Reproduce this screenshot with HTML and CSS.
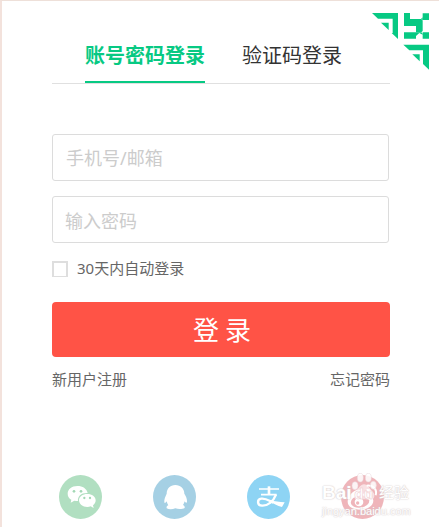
FILE: index.html
```html
<!DOCTYPE html>
<html lang="zh-CN">
<head>
    <meta charset="UTF-8">
    <meta name="viewport" content="width=device-width, initial-scale=1.0">
    <title>账号密码登录</title>
    <link rel="stylesheet" href="styles.css">
</head>
<body>

<div class="login-box">
    <svg class="qr-corner" viewBox="36 39 171 171">
        <path d="M36 39H114V117L95 99H98V56H54z"/>
        <path d="M63 68H86V90z"/>
        <path d="M132 39H150V57H183L188 62V93L184 97H168V78H132z"/>
        <path d="M132 97H168V116H132zM188 40H207V60H188zM188 97H207V116H188z"/>
        <path d="M183 57L188 52V62zM168 97H184L188 101V104L178 99L168 108z"/>
        <path d="M130 134H207V209L189 192V151H148z"/>
        <path d="M157 163H179V184z"/>
    </svg>

    <div class="tabs">
        <a class="tab active">账号密码登录</a>
        <a class="tab">验证码登录</a>
    </div>

    <form class="login-form">
        <input type="text" class="field" placeholder="手机号/邮箱">
        <input type="password" class="field field-password" placeholder="输入密码">
        <label class="remember">
            <span class="checkbox"></span>
            <span>30天内自动登录</span>
        </label>
        <button type="button" class="submit">登录</button>
        <div class="links">
            <a>新用户注册</a>
            <a>忘记密码</a>
        </div>
    </form>

    <div class="socials">
        <!-- wechat -->
        <svg class="social" viewBox="0 0 129 132">
            <ellipse cx="64.5" cy="66" rx="64.5" ry="66" fill="#b1dfc1"/>
            <path fill="#fff" d="M55 33C38 33 26 43 26 56c0 8 4 14 11 18l-2 9 11-6c4 1 7 1 11 1-2-14 10-25 29-24C83 41 71 33 55 33z"/>
            <path fill="#fff" d="M85 57c-14 0-25 8-25 19s11 20 25 20c4 0 7-1 10-2l9 5-2-8c5-4 8-9 8-15 0-11-11-19-25-19z"/>
            <g fill="#a3d8b5">
                <circle cx="45" cy="49" r="4"/>
                <circle cx="66" cy="49" r="4"/>
                <circle cx="76" cy="69" r="3.5"/>
                <circle cx="93" cy="69" r="3.5"/>
            </g>
        </svg>
        <!-- qq -->
        <svg class="social" viewBox="0 0 129 132">
            <ellipse cx="64.5" cy="66" rx="64.5" ry="66" fill="#a5d0e4"/>
            <path fill="#fff" d="M67 30C51 30 41 41 41 56c-4 9-8 17-7 26 1 4 4 2 7-3 1 5 3 9 5 12-5 2-6 5-5 9 7 4 18 3 26 0 8 3 21 3 28-1 1-4-1-7-5-9 2-3 4-7 5-11 3 5 6 6 7 2 1-9-3-17-8-25 0-15-11-26-27-26z"/>
        </svg>
        <!-- alipay -->
        <svg class="social" viewBox="0 0 129 132">
            <ellipse cx="64.5" cy="66" rx="64.5" ry="66" fill="#8ed4f4"/>
            <g fill="none" stroke="#fff">
                <path stroke-width="5" d="M36 42H96M42 59H89"/>
                <path stroke-width="8" d="M66 34V59"/>
                <path stroke-width="7" d="M87 59C79 80 62 93 45 92 30 91 29 73 43 71c14-2 24 7 36 12"/>
                <path fill="#fff" stroke="none" d="M70 75c13 4 27 6 43 7L105 96C91 92 79 84 67 80z"/>
            </g>
        </svg>
        <!-- weibo -->
        <svg class="social" viewBox="0 0 129 132">
            <ellipse cx="64.5" cy="66" rx="64.5" ry="66" fill="#efb5ba"/>
            <path fill="#fff" d="M48 45C35 48 20 65 20 80c0 16 19 24 37 24 23 0 40-13 40-27 0-8-6-11-12-13 2-9-3-13-20-7 2-9-3-14-17-12z"/>
            <ellipse cx="57" cy="80" rx="28" ry="18" fill="#efb5ba" transform="rotate(-7 57 80)"/>
            <circle cx="54" cy="81" r="13" fill="#fff"/>
            <circle cx="50" cy="84" r="5" fill="#efb5ba"/>
            <path fill="none" stroke="#fff" stroke-width="6" d="M77 32c20-3 32 12 27 29M77 45c10-1 15 5 13 13"/>
        </svg>
    </div>

    <div class="watermark">
        <div class="wm-brand">
            <span class="wm-bai">Bai</span>
            <svg class="wm-paw" viewBox="0 0 84 84">
                <g fill="#fff" fill-opacity="0.85" stroke="#e6d5d8" stroke-width="1.5">
                    <ellipse cx="18" cy="38" rx="9" ry="12"/>
                    <ellipse cx="34" cy="14" rx="9" ry="13"/>
                    <ellipse cx="58" cy="14" rx="9" ry="13"/>
                    <ellipse cx="73" cy="37" rx="9" ry="12"/>
                </g>
                <path fill="#fff" fill-opacity="0.6" d="M45 34c-11 0-15 12-24 20-10 9-8 27 8 27 7 0 11-2 17-2s10 2 17 2c15 0 17-17 7-26-9-8-13-21-25-21z"/>
                <text x="44" y="77" text-anchor="middle" class="wm-du">du</text>
            </svg>
            <span class="wm-cn">经验</span>
        </div>
        <div class="wm-url">jingyan.baidu.com</div>
    </div>
</div>

</body>
</html>
```
FILE: styles.css
```css
* {
    box-sizing: border-box;
}

body {
    margin: 0;
    font-family: "Noto Sans", "Noto Sans CJK SC", sans-serif;
    background-color: #fff;
    color: #666;
    overflow: hidden;
}

.login-box {
    position: relative;
    width: 439px;
    height: 527px;
    padding: 28px 49px 0 50px;
    border-top: 1px solid #eee0d9;
    border-left: 2px solid #f3e2dc;
    background: #fff;
}

.qr-corner {
    position: absolute;
    top: 12px;
    right: 10px;
    width: 57px;
    height: 57px;
    fill: #07c983;
}

.tabs {
    display: flex;
    gap: 37px;
    height: 55px;
    padding-left: 33px;
    border-bottom: 1px solid #e0e0e0;
}

.tab {
    height: 54px;
    font-size: 20px;
    line-height: 54px;
    color: #333;
    white-space: nowrap;
}

.tab.active {
    color: #07c983;
    font-weight: bold;
    border-bottom: 2px solid #07c983;
}

.login-form {
    display: flex;
    flex-direction: column;
    padding-top: 50px;
}

.field {
    width: 337px;
    height: 47px;
    margin: 0 0 15px;
    padding: 1px 13px 0;
    border: 1px solid #dcdcdc;
    border-radius: 3px;
    font-family: inherit;
    font-size: 18px;
    outline: none;
}

.field-password {
    padding: 3px 12px 0;
}

.field::placeholder {
    color: #ccc;
    opacity: 1;
}

.remember {
    display: flex;
    align-items: center;
    gap: 9px;
    height: 22px;
    font-size: 15px;
    line-height: 18px;
}

.remember span:last-child {
    padding-bottom: 3px;
}

.checkbox {
    width: 16px;
    height: 16px;
    border: 2px solid #dedede;
    border-bottom-width: 1px;
}

.submit {
    height: 55px;
    margin: 22px 0 10px;
    padding: 0 0 1px 8px;
    border: none;
    border-radius: 4px;
    background-color: #ff5346;
    color: #fff;
    font-family: inherit;
    font-size: 26px;
    letter-spacing: 6px;
}

.links {
    display: flex;
    justify-content: space-between;
    font-size: 15px;
    line-height: 24px;
}

.socials {
    display: flex;
    justify-content: space-between;
    padding: 84px 6px 0 7px;
}

.social {
    width: 43px;
    height: 44px;
}

/* stamp over the bottom right corner */
.watermark {
    position: absolute;
    left: 320px;
    top: 472px;
    color: #fff;
    text-shadow: 0 0 1px #d4c8ca, 0 0 2px #d8d0d1;
}

.wm-brand {
    display: flex;
    align-items: flex-end;
    height: 31px;
}

.wm-bai {
    width: 27px;
    font: bold 19px/22px "Liberation Sans", sans-serif;
}

.wm-paw {
    width: 28px;
    height: 28px;
    margin-bottom: 3px;
}

.wm-du {
    fill: #fff;
    stroke: #ecc9cd;
    stroke-width: 1.5px;
    font: bold 46px "Liberation Sans", sans-serif;
    text-shadow: none;
}

.wm-cn {
    margin-left: 2px;
    font-size: 15px;
    line-height: 23px;
}

.wm-url {
    font: 11px/14px "Liberation Sans", sans-serif;
}
```
